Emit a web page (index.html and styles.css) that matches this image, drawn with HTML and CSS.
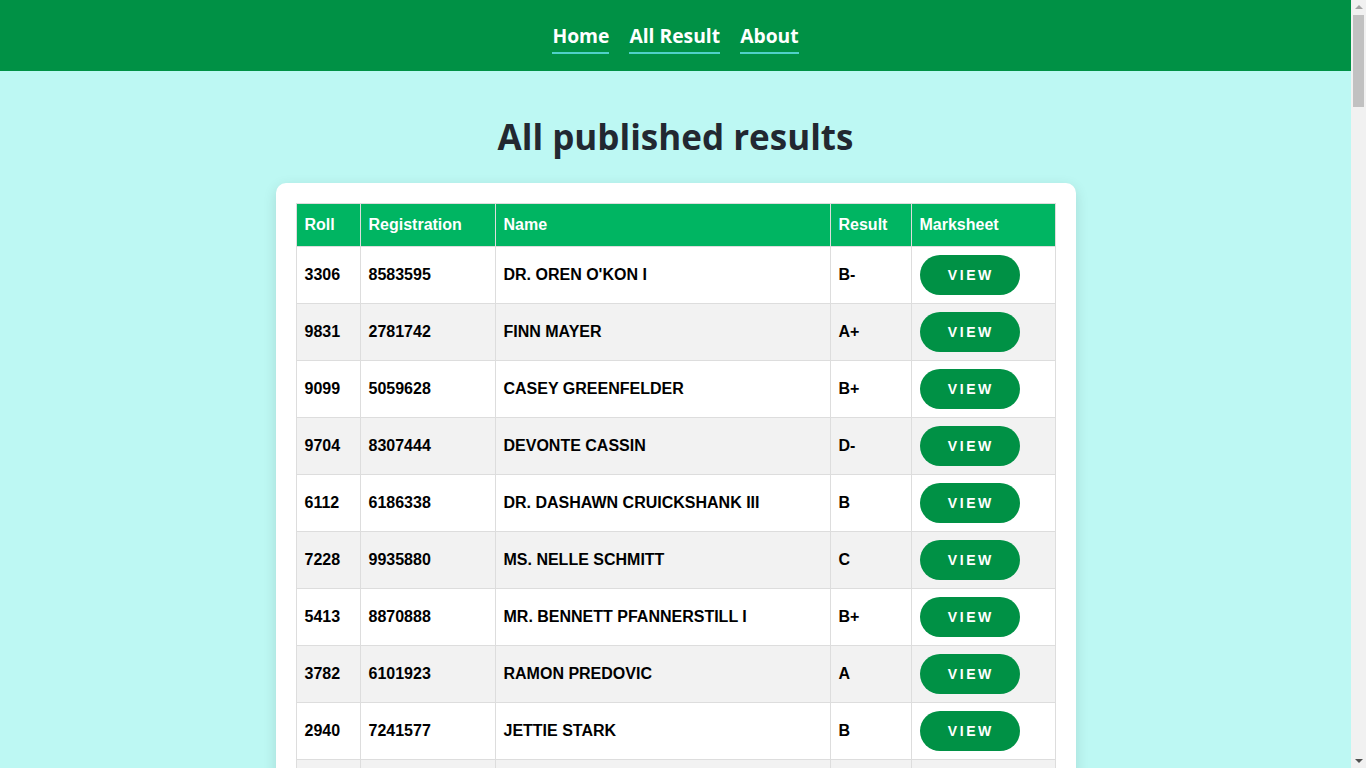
FILE: index.html
```html
<!DOCTYPE html>
<html>
<head>
<meta charset="utf-8">
<title>All published results</title>
<link rel="stylesheet" href="styles.css">
</head>
<body>
<div class="page">
  <header class="topbar">
    <nav class="nav">
      <a href="#" class="nav-link">Home</a>
      <a href="#" class="nav-link">All Result</a>
      <a href="#" class="nav-link">About</a>
    </nav>
  </header>
  <main class="main">
    <h1 class="title">All published results</h1>
    <div class="card">
      <table class="results">
        <colgroup>
          <col class="c-roll"><col class="c-reg"><col class="c-name"><col class="c-res"><col class="c-mark">
        </colgroup>
        <thead>
          <tr><th>Roll</th><th>Registration</th><th>Name</th><th>Result</th><th>Marksheet</th></tr>
        </thead>
        <tbody>
          <tr><td>3306</td><td>8583595</td><td>DR. OREN O'KON I</td><td>B-</td><td><a class="btn" href="#">VIEW</a></td></tr>
          <tr><td>9831</td><td>2781742</td><td>FINN MAYER</td><td>A+</td><td><a class="btn" href="#">VIEW</a></td></tr>
          <tr><td>9099</td><td>5059628</td><td>CASEY GREENFELDER</td><td>B+</td><td><a class="btn" href="#">VIEW</a></td></tr>
          <tr><td>9704</td><td>8307444</td><td>DEVONTE CASSIN</td><td>D-</td><td><a class="btn" href="#">VIEW</a></td></tr>
          <tr><td>6112</td><td>6186338</td><td>DR. DASHAWN CRUICKSHANK III</td><td>B</td><td><a class="btn" href="#">VIEW</a></td></tr>
          <tr><td>7228</td><td>9935880</td><td>MS. NELLE SCHMITT</td><td>C</td><td><a class="btn" href="#">VIEW</a></td></tr>
          <tr><td>5413</td><td>8870888</td><td>MR. BENNETT PFANNERSTILL I</td><td>B+</td><td><a class="btn" href="#">VIEW</a></td></tr>
          <tr><td>3782</td><td>6101923</td><td>RAMON PREDOVIC</td><td>A</td><td><a class="btn" href="#">VIEW</a></td></tr>
          <tr><td>2940</td><td>7241577</td><td>JETTIE STARK</td><td>B</td><td><a class="btn" href="#">VIEW</a></td></tr>
          <tr><td>4517</td><td>3390214</td><td>LOLA HAMMES</td><td>A-</td><td><a class="btn" href="#">VIEW</a></td></tr>
          <tr><td>8265</td><td>1478830</td><td>PROF. ELMER KUHN</td><td>C+</td><td><a class="btn" href="#">VIEW</a></td></tr>
        </tbody>
      </table>
    </div>
  </main>
</div>
<aside class="scrollbar" aria-hidden="true">
  <span class="sb-arrow sb-up"></span>
  <span class="sb-track"><span class="sb-thumb"></span></span>
  <span class="sb-arrow sb-down"></span>
</aside>
</body>
</html>
```

FILE: styles.css
```css
* { box-sizing: border-box; }
html, body { margin: 0; padding: 0; }
body {
  background: #bdf8f3;
  font-family: "Liberation Sans", Arial, sans-serif;
  color: #000;
  display: flex;
  align-items: flex-start;
}
.page {
  flex: 1;
  min-width: 0;
}
.scrollbar {
  position: sticky;
  top: 0;
  width: 15px;
  height: 100vh;
  background: #f1f1f1;
  display: flex;
  flex-direction: column;
  align-items: center;
}
.sb-arrow {
  width: 15px;
  height: 15px;
  display: flex;
  align-items: center;
  justify-content: center;
}
.sb-arrow::before {
  content: "";
  width: 0;
  height: 0;
  border-left: 4px solid transparent;
  border-right: 4px solid transparent;
}
.sb-up::before { border-bottom: 4px solid #a3a3a3; margin-top: -1px; }
.sb-down::before { border-top: 4px solid #505050; margin-bottom: -1px; }
.sb-track {
  flex: 1;
  width: 15px;
  display: flex;
  justify-content: center;
}
.sb-thumb {
  width: 11px;
  height: 92px;
  background: #c1c1c1;
}
.topbar {
  background: #009145;
  height: 71px;
  display: flex;
  justify-content: center;
  align-items: flex-start;
}
.nav {
  display: flex;
  gap: 20px;
  padding-top: 22px;
}
.nav-link {
  font-family: "Open Sans", sans-serif;
  font-weight: 700;
  font-size: 19.3px;
  line-height: 28px;
  color: #fff;
  text-decoration: none;
  border-bottom: 2px solid #4fd1c9;
  padding-bottom: 2px;
}
.main {
  display: flex;
  flex-direction: column;
  align-items: center;
  padding-bottom: 40px;
}
.title {
  font-family: "Open Sans", sans-serif;
  font-weight: 700;
  font-size: 35px;
  line-height: 48px;
  color: #222831;
  margin: 42px 0 22px;
}
.card {
  width: 800px;
  background: #fff;
  border-radius: 10px;
  padding: 20px;
  box-shadow: 0 4px 14px rgba(0, 0, 0, 0.12);
}
.results {
  width: 100%;
  border-collapse: collapse;
  table-layout: fixed;
  font-size: 16px;
  font-weight: 700;
}
.c-roll { width: 64px; }
.c-reg { width: 135px; }
.c-name { width: 335px; }
.c-res { width: 81px; }
.c-mark { width: 144px; }
.results th, .results td {
  border: 1px solid #dddddd;
  text-align: left;
  padding: 8px 8px;
  line-height: 18px;
}
.results th {
  background: #00b562;
  color: #fff;
  padding: 12px 8px;
}
.results td { height: 57px; }
.results tbody tr:nth-child(even) td { background: #f2f2f2; }
.btn {
  display: inline-block;
  width: 100px;
  height: 40px;
  line-height: 40px;
  border-radius: 20px;
  background: #009145;
  color: #fff;
  text-align: center;
  text-decoration: none;
  font-size: 14px;
  font-weight: 700;
  letter-spacing: 2.6px;
  padding-left: 2.6px;
}
```
